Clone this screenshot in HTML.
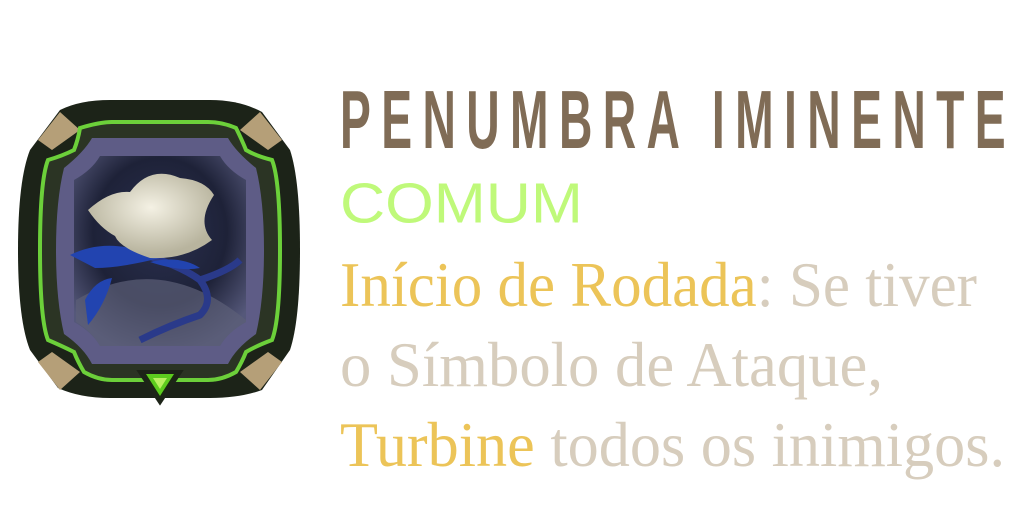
<!DOCTYPE html>
<html><head><meta charset="utf-8"><style>
html,body{margin:0;padding:0;background:#fff;width:1024px;height:512px;overflow:hidden;position:relative}
.t{position:absolute;left:340px;white-space:nowrap;transform-origin:0 0;line-height:1}
#title{font-family:"Liberation Sans",sans-serif;font-weight:bold;font-size:80px;color:#806c56;letter-spacing:18px}
#rar{font-family:"Liberation Sans",sans-serif;font-size:60px;color:#bff97a}
.s{font-family:"Liberation Serif",serif;font-size:64px;color:#d7cdbd}
.g{color:#ecc458}
</style></head><body>
<svg style="position:absolute;left:0;top:0" width="320" height="420" viewBox="0 0 320 420">
<defs>
<radialGradient id="bg" cx="50%" cy="40%" r="65%"><stop offset="0" stop-color="#2a3050"/><stop offset="0.6" stop-color="#1e2238"/><stop offset="1" stop-color="#55587a"/></radialGradient>
<radialGradient id="fl" cx="50%" cy="40%" r="55%"><stop offset="0" stop-color="#f4f1e4"/><stop offset="1" stop-color="#b8b49e"/></radialGradient>
</defs>
<path d="M60 110 Q80 100 110 100 L210 100 Q240 100 262 112 L290 150 Q300 180 300 250 Q300 320 290 350 L262 390 Q240 398 210 398 L110 398 Q80 398 58 388 L30 350 Q18 320 18 250 Q18 180 30 150 Z" fill="#1c2318"/>
<path d="M38 140 L60 112 L80 130 L52 150 Z M282 140 L260 112 L240 130 L268 150 Z M38 362 L60 390 L80 372 L52 352 Z M282 362 L260 390 L240 372 L268 352 Z" fill="#b59f78"/>
<path d="M80 128 Q100 122 112 122 L208 122 Q222 122 236 128 Q242 140 246 150 Q256 156 272 160 Q280 180 280 250 Q280 320 272 340 Q256 346 246 352 Q242 362 236 372 Q222 380 208 380 L112 380 Q98 380 84 372 Q78 362 74 352 Q62 346 48 340 Q40 320 40 250 Q40 180 48 160 Q62 156 74 150 Q78 140 80 128 Z" fill="#2b3424" stroke="#6cd03a" stroke-width="4"/>
<path d="M92 138 L228 138 Q236 152 256 168 Q264 200 264 250 Q264 300 256 334 Q236 348 228 364 L92 364 Q84 348 64 334 Q56 300 56 250 Q56 200 64 168 Q84 152 92 138 Z" fill="#5e5c86"/>
<path d="M100 156 L220 156 Q228 170 246 180 L246 322 Q228 332 220 346 L100 346 Q92 332 74 322 L74 180 Q92 170 100 156 Z" fill="url(#bg)"/>
<path d="M76 300 Q160 250 246 320 L246 322 Q228 332 220 346 L100 346 Q92 332 76 322Z" fill="#5c6078" opacity="0.7"/>
<path d="M130 250 Q180 265 200 280 Q215 300 200 315 Q170 325 140 340 M200 280 Q230 270 240 260" stroke="#2a3a8a" stroke-width="7" fill="none"/>
<path d="M70 255 Q110 235 160 258 Q120 268 95 268 Z M85 300 Q95 280 112 278 Q105 305 88 325 Z M150 262 Q180 255 200 268 Q180 272 150 262Z" fill="#2244b0"/>
<path d="M88 210 Q110 190 130 192 Q150 165 180 178 Q205 180 214 195 Q196 222 212 240 Q185 260 150 258 Q120 248 115 236 Q100 228 88 210 Z" fill="url(#fl)"/>
<path d="M140 372 L180 372 L160 402 Z" fill="#1a2a10" stroke="#1d2418" stroke-width="4"/>
<path d="M146 374 L174 374 L160 396 Z" fill="#5ccc1e"/>
<path d="M153 378 L167 378 L160 389 Z" fill="#b8f060"/>
</svg>
<div class="t" id="title" style="top:79px">PENUMBRA IMINENTE</div>
<div class="t" id="rar" style="top:175px">COMUM</div>
<div class="t s" id="l1" style="top:253px"><span class="g">Início de Rodada</span>: Se tiver</div>
<div class="t s" id="l2" style="top:333px">o Símbolo de Ataque,</div>
<div class="t s" id="l3" style="top:413px"><span class="g">Turbine</span> todos os inimigos.</div>
<script>
function fit(id,w,hs){var e=document.getElementById(id);var r=e.getBoundingClientRect();e.style.transform='scale('+(w/r.width)+','+(hs||1)+')';}
fit('title',676,1.03);fit('rar',243,0.95);fit('l1',637,1);fit('l2',543,1);fit('l3',665,1);
</script>
</body></html>
